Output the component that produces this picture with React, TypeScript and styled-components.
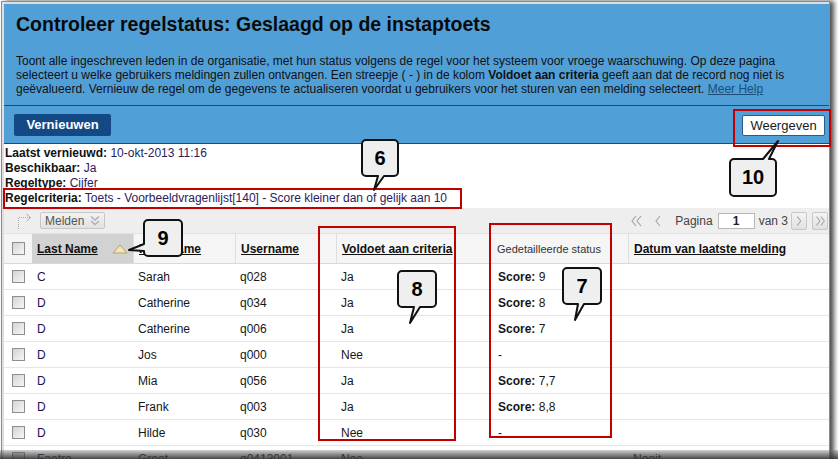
import React from "react";
import styled, { createGlobalStyle } from "styled-components";

const GlobalStyle = createGlobalStyle`
  html, body {
    margin: 0;
    padding: 0;
    overflow: hidden;
    background: #fff;
  }
  body {
    font-family: "Liberation Sans", Arial, sans-serif;
    font-size: 12px;
    color: #111;
  }
`;

type Tail = { side: "top" | "bottom" | "left"; a: number; b: number; tx: number; ty: number };

const rows = [
  { last: "C", first: "Sarah", user: "q028", ok: "Ja", score: "9", date: "" },
  { last: "D", first: "Catherine", user: "q034", ok: "Ja", score: "8", date: "" },
  { last: "D", first: "Catherine", user: "q006", ok: "Ja", score: "7", date: "" },
  { last: "D", first: "Jos", user: "q000", ok: "Nee", score: "", date: "" },
  { last: "D", first: "Mia", user: "q056", ok: "Ja", score: "7,7", date: "" },
  { last: "D", first: "Frank", user: "q003", ok: "Ja", score: "8,8", date: "" },
  { last: "D", first: "Hilde", user: "q030", ok: "Nee", score: "", date: "" },
  { last: "Faetro", first: "Groot", user: "q0413001", ok: "Nee", score: null, date: "Nooit" },
];

const callouts: { label: string; x: number; y: number; w: number; h: number; tail: Tail }[] = [
  { label: "6", x: 361, y: 139, w: 38, h: 38, tail: { side: "bottom", a: 16, b: 22, tx: 12, ty: 50 } },
  { label: "10", x: 729, y: 158, w: 48, h: 39, tail: { side: "top", a: 33, b: 39, tx: 48, ty: -18 } },
  { label: "9", x: 143, y: 219, w: 40, h: 38, tail: { side: "left", a: 24, b: 31, tx: -15, ty: 30 } },
  { label: "8", x: 397, y: 270, w: 40, h: 38, tail: { side: "bottom", a: 16, b: 22, tx: 12, ty: 52 } },
  { label: "7", x: 562, y: 267, w: 40, h: 38, tail: { side: "bottom", a: 15, b: 21, tx: 12, ty: 52 } },
];

const highlights = [
  { x: 733, y: 109, w: 98, h: 38 },
  { x: 3, y: 188, w: 459, h: 21 },
  { x: 318, y: 226, w: 138, h: 215 },
  { x: 489, y: 223, w: 123, h: 215 },
];

function calloutPath(w: number, h: number, t: Tail) {
  const r = 4;
  const arc = (x: number, y: number) => `A ${r} ${r} 0 0 1 ${x} ${y}`;
  const top = t.side === "top" ? `H ${t.a} L ${t.tx} ${t.ty} L ${t.b} 0 ` : "";
  const bottom = t.side === "bottom" ? `H ${t.b} L ${t.tx} ${t.ty} L ${t.a} ${h} ` : "";
  const left = t.side === "left" ? `V ${t.b} L ${t.tx} ${t.ty} L 0 ${t.a} ` : "";
  return `M ${r} 0 ${top}H ${w - r} ${arc(w, r)} V ${h - r} ${arc(w - r, h)} ${bottom}H ${r} ${arc(0, h - r)} ${left}V ${r} ${arc(r, 0)} Z`;
}

const Callout = ({ label, w, h, tail, x, y }: { label: string; x: number; y: number; w: number; h: number; tail: Tail }) => (
  <CalloutBox $x={x} $y={y} $w={w} $h={h}>
    <svg width={w + 48} height={h + 48} viewBox={`-24 -24 ${w + 48} ${h + 48}`}>
      <path d={calloutPath(w - 2, h - 2, tail)} transform="translate(1 1)" fill="#efefef" stroke="#111" strokeWidth="2" strokeLinejoin="round" />
    </svg>
    <CalloutLabel>{label}</CalloutLabel>
  </CalloutBox>
);

const Checkbox = () => <Check />;

const DottedArrow = () => (
  <svg width="17" height="18" viewBox="0 0 17 18">
    <path d="M2.5 17 V5.5 H14" fill="none" stroke="#a8a8a8" strokeWidth="1" strokeDasharray="1 1" />
    <path d="M10.5 2 L14.5 5.5 L10.5 9" fill="none" stroke="#a8a8a8" strokeWidth="1" />
  </svg>
);

const DoubleDown = () => (
  <svg width="12" height="12" viewBox="0 0 12 12">
    <path d="M2 1.5 L6 5 L10 1.5 M2 6 L6 9.5 L10 6" fill="none" stroke="#b0b0b0" strokeWidth="1.4" />
  </svg>
);

const Chevron = ({ dir, double }: { dir: "left" | "right"; double?: boolean }) => {
  const d =
    dir === "left"
      ? double
        ? "M7 3 L3 8 L7 13 M12 3 L8 8 L12 13"
        : "M7 3 L3 8 L7 13"
      : double
        ? "M4 3 L8 8 L4 13 M9 3 L13 8 L9 13"
        : "M6 3 L10 8 L6 13";
  return (
    <svg width="16" height="16" viewBox="0 0 16 16">
      <path d={d} fill="none" stroke="#a6a6a6" strokeWidth="1.2" />
    </svg>
  );
};

const SortUp = () => (
  <svg width="16" height="11" viewBox="0 0 16 11">
    <path d="M1 10 L8 2 L15 10 Z" fill="#f3e6b6" stroke="#b5a06a" strokeWidth="1" strokeLinejoin="round" />
  </svg>
);

export default function App() {
  return (
    <>
      <GlobalStyle />
      <Frame>
        <Page>
          <Header>
            <Title>Controleer regelstatus: Geslaagd op de instaptoets</Title>
            <Description>
              Toont alle ingeschreven leden in de organisatie, met hun status volgens de regel voor het systeem voor vroege waarschuwing. Op deze pagina
              <br />
              selecteert u welke gebruikers meldingen zullen ontvangen. Een streepje ( - ) in de kolom <b>Voldoet aan criteria</b> geeft aan dat de record nog niet is
              <br />
              geëvalueerd. Vernieuw de regel om de gegevens te actualiseren voordat u gebruikers voor het sturen van een melding selecteert. <HelpLink>Meer Help</HelpLink>
            </Description>
          </Header>

          <Toolbar>
            <PrimaryButton>Vernieuwen</PrimaryButton>
            <PlainButton>Weergeven</PlainButton>
          </Toolbar>

          <Info>
            <InfoLine><Label>Laatst vernieuwd:</Label> <Value>10-okt-2013 11:16</Value></InfoLine>
            <InfoLine><Label>Beschikbaar:</Label> <Value>Ja</Value></InfoLine>
            <InfoLine><Label>Regeltype:</Label> <Value>Cijfer</Value></InfoLine>
            <InfoLine><Label>Regelcriteria:</Label> <Value>Toets - Voorbeeldvragenlijst[140] - Score kleiner dan of gelijk aan 10</Value></InfoLine>
          </Info>

          <ActionBar>
            <ActionLeft>
              <DottedArrow />
              <MenuButton>
                Melden
                <DoubleDown />
              </MenuButton>
            </ActionLeft>
            <Pager>
              <PagerIcon><Chevron dir="left" double /></PagerIcon>
              <PagerIcon $ml={8}><Chevron dir="left" /></PagerIcon>
              <PagerText $ml={6}>Pagina</PagerText>
              <PageInput $ml={5}>1</PageInput>
              <PagerText $ml={4}>van 3</PagerText>
              <PagerIcon $ml={3} $boxed><Chevron dir="right" /></PagerIcon>
              <PagerIcon $ml={5} $boxed><Chevron dir="right" double /></PagerIcon>
            </Pager>
          </ActionBar>

          <HeadRow>
            <HeadCell $first><Checkbox /></HeadCell>
            <HeadCell $sorted>
              <HeadLink>Last Name</HeadLink>
              <SortUp />
            </HeadCell>
            <HeadCell><HeadLink>First Name</HeadLink></HeadCell>
            <HeadCell><HeadLink>Username</HeadLink></HeadCell>
            <HeadCell><HeadLink>Voldoet aan criteria</HeadLink></HeadCell>
            <HeadCell><HeadPlain>Gedetailleerde status</HeadPlain></HeadCell>
            <HeadCell><HeadLink>Datum van laatste melding</HeadLink></HeadCell>
          </HeadRow>

          {rows.map((r, i) => (
            <Row key={i}>
              <Cell $first><Checkbox /></Cell>
              <Cell $accent>{r.last}</Cell>
              <Cell>{r.first}</Cell>
              <Cell>{r.user}</Cell>
              <Cell>{r.ok}</Cell>
              <Cell $wide>
                {r.score === null ? "" : r.score ? (<><b>Score:</b>&nbsp;{r.score}</>) : "-"}
              </Cell>
              <Cell>{r.date}</Cell>
            </Row>
          ))}
        </Page>

        <Annotations>
          {highlights.map((h, i) => (
            <Highlight key={i} $x={h.x} $y={h.y} $w={h.w} $h={h.h} />
          ))}
          {callouts.map((c) => (
            <Callout key={c.label} {...c} />
          ))}
          <BottomShade />
        </Annotations>
      </Frame>
    </>
  );
}

const Frame = styled.div`
  position: relative;
  margin: 1px 0 0 1px;
  width: 829px;
  height: 470px;
  box-sizing: border-box;
  border: 1px solid #8c8c8c;
  padding: 2px 0 0 2px;
  background: #dedede;
  box-shadow: 4px 0 5px rgba(0, 0, 0, 0.7);
`;

const Page = styled.div`
  height: 100%;
  overflow: hidden;
  background: #fff;
`;

const Header = styled.div`
  background: #519fd7;
  padding: 8px 12px 9px 12px;
  border-bottom: 1px solid #1c4a76;
`;

const Title = styled.h1`
  margin: 0 0 18px;
  font-size: 19.5px;
  line-height: 24px;
  font-weight: bold;
  color: #0a0a0a;
`;

const Description = styled.p`
  margin: 0;
  font-size: 12px;
  line-height: 14px;
  white-space: nowrap;
  color: #111;
`;

const HelpLink = styled.span`
  color: #1b4c78;
  text-decoration: underline;
`;

const Toolbar = styled.div`
  height: 37px;
  background: #519fd7;
  border-bottom: 1px solid #1c4a76;
  display: flex;
  align-items: center;
  justify-content: space-between;
  padding: 0 4px 0 10px;
`;

const PrimaryButton = styled.div`
  width: 97px;
  height: 22px;
  box-sizing: border-box;
  background: #134a85;
  border-radius: 2px;
  color: #fff;
  font-weight: bold;
  font-size: 13px;
  display: flex;
  align-items: center;
  justify-content: center;
`;

const PlainButton = styled.div`
  width: 83px;
  height: 21px;
  margin-top: 2px;
  box-sizing: border-box;
  background: #fff;
  border: 1px solid #2b5b8a;
  border-radius: 2px;
  color: #1a1a1a;
  font-size: 13px;
  display: flex;
  align-items: center;
  justify-content: center;
`;

const Info = styled.div`
  padding: 2px 0 2px 1px;
`;

const InfoLine = styled.div`
  font-size: 12px;
  line-height: 15px;
  white-space: nowrap;
`;

const Label = styled.b`
  color: #111;
`;

const Value = styled.span`
  color: #2a215c;
`;

const ActionBar = styled.div`
  height: 25px;
  box-sizing: border-box;
  background: #eeeeee;
  display: flex;
  align-items: center;
  justify-content: space-between;
  padding: 0 1px 0 12px;
`;

const ActionLeft = styled.div`
  display: flex;
  align-items: center;
  gap: 7px;
`;

const MenuButton = styled.div`
  width: 65px;
  height: 17px;
  box-sizing: border-box;
  border: 1px solid #c6c6c6;
  border-radius: 2px;
  background: linear-gradient(#f2f2f2, #e2e2e2);
  color: #555;
  font-size: 12px;
  display: flex;
  align-items: center;
  justify-content: space-between;
  padding: 0 3px 0 4px;
`;

const Pager = styled.div`
  display: flex;
  align-items: center;
`;

const PagerIcon = styled.div<{ $ml?: number; $boxed?: boolean }>`
  width: 16px;
  height: 18px;
  box-sizing: border-box;
  margin-left: ${(p) => p.$ml ?? 0}px;
  display: flex;
  align-items: center;
  justify-content: center;
  border: ${(p) => (p.$boxed ? "1px solid #c8c8c8" : "none")};
  border-radius: 2px;
  background: ${(p) => (p.$boxed ? "linear-gradient(#f4f4f4, #e0e0e0)" : "transparent")};
`;

const PagerText = styled.span<{ $ml?: number }>`
  margin-left: ${(p) => p.$ml ?? 0}px;
  font-size: 12px;
  color: #444;
`;

const PageInput = styled.div<{ $ml?: number }>`
  margin-left: ${(p) => p.$ml ?? 0}px;
  width: 37px;
  height: 16px;
  box-sizing: border-box;
  border: 1px solid #b8b8b8;
  background: #fff;
  font-size: 12px;
  font-weight: bold;
  color: #222;
  display: flex;
  align-items: center;
  justify-content: center;
`;

const columns = "28px 101px 102px 101px 154px 138px 1fr";

const HeadRow = styled.div`
  display: grid;
  grid-template-columns: ${columns};
  height: 31px;
  box-sizing: border-box;
  background: #f5f5f5;
  border-top: 1px solid #e2e2e2;
  border-bottom: 1px solid #d9d9d9;
`;

const HeadCell = styled.div<{ $sorted?: boolean; $first?: boolean }>`
  display: flex;
  align-items: center;
  justify-content: ${(p) => (p.$first ? "center" : "space-between")};
  padding: ${(p) => (p.$first ? "0 0 0 1px" : "0 5px 0 5px")};
  border-left: ${(p) => (p.$first || p.$sorted ? "none" : "1px solid #dedede")};
  background: ${(p) => (p.$sorted ? "#d2d2d2" : "transparent")};
`;

const HeadLink = styled.span`
  font-weight: bold;
  font-size: 12px;
  text-decoration: underline;
  color: #111;
  white-space: nowrap;
`;

const HeadPlain = styled.span`
  font-size: 11px;
  color: #333;
  white-space: nowrap;
  padding-left: 1px;
`;

const Row = styled.div`
  display: grid;
  grid-template-columns: ${columns};
  height: 26px;
  box-sizing: border-box;
  border-bottom: 1px solid #e6e6e6;
`;

const Cell = styled.div<{ $first?: boolean; $accent?: boolean; $wide?: boolean }>`
  display: flex;
  align-items: center;
  justify-content: ${(p) => (p.$first ? "center" : "flex-start")};
  padding-left: ${(p) => (p.$first ? 1 : p.$wide ? 8 : 5)}px;
  font-size: 12px;
  color: ${(p) => (p.$accent ? "#23114a" : "#161616")};
  white-space: nowrap;
`;

const Check = styled.span`
  display: inline-block;
  width: 13px;
  height: 13px;
  box-sizing: border-box;
  border: 1px solid #8e8e8e;
  background: linear-gradient(135deg, #d4d4d4, #f6f6f6);
`;

const Annotations = styled.div`
  position: absolute;
  left: -2px;
  top: -2px;
  width: 838px;
  height: 459px;
  pointer-events: none;
`;

const Highlight = styled.div<{ $x: number; $y: number; $w: number; $h: number }>`
  position: absolute;
  left: ${(p) => p.$x}px;
  top: ${(p) => p.$y}px;
  width: ${(p) => p.$w}px;
  height: ${(p) => p.$h}px;
  box-sizing: border-box;
  border: 2px solid #c10000;
`;

const CalloutBox = styled.div<{ $x: number; $y: number; $w: number; $h: number }>`
  position: absolute;
  left: ${(p) => p.$x}px;
  top: ${(p) => p.$y}px;
  width: ${(p) => p.$w}px;
  height: ${(p) => p.$h}px;
  display: flex;
  align-items: center;
  justify-content: center;

  svg {
    position: absolute;
    left: -24px;
    top: -24px;
    overflow: visible;
  }
`;

const CalloutLabel = styled.span`
  position: relative;
  font-family: "Liberation Sans", Arial, sans-serif;
  font-weight: bold;
  font-size: 20px;
  color: #000;
`;

const BottomShade = styled.div`
  position: absolute;
  left: 0;
  top: 450px;
  width: 838px;
  height: 9px;
  background: linear-gradient(rgba(120, 120, 120, 0.35), rgba(50, 50, 50, 0.9));
`;
